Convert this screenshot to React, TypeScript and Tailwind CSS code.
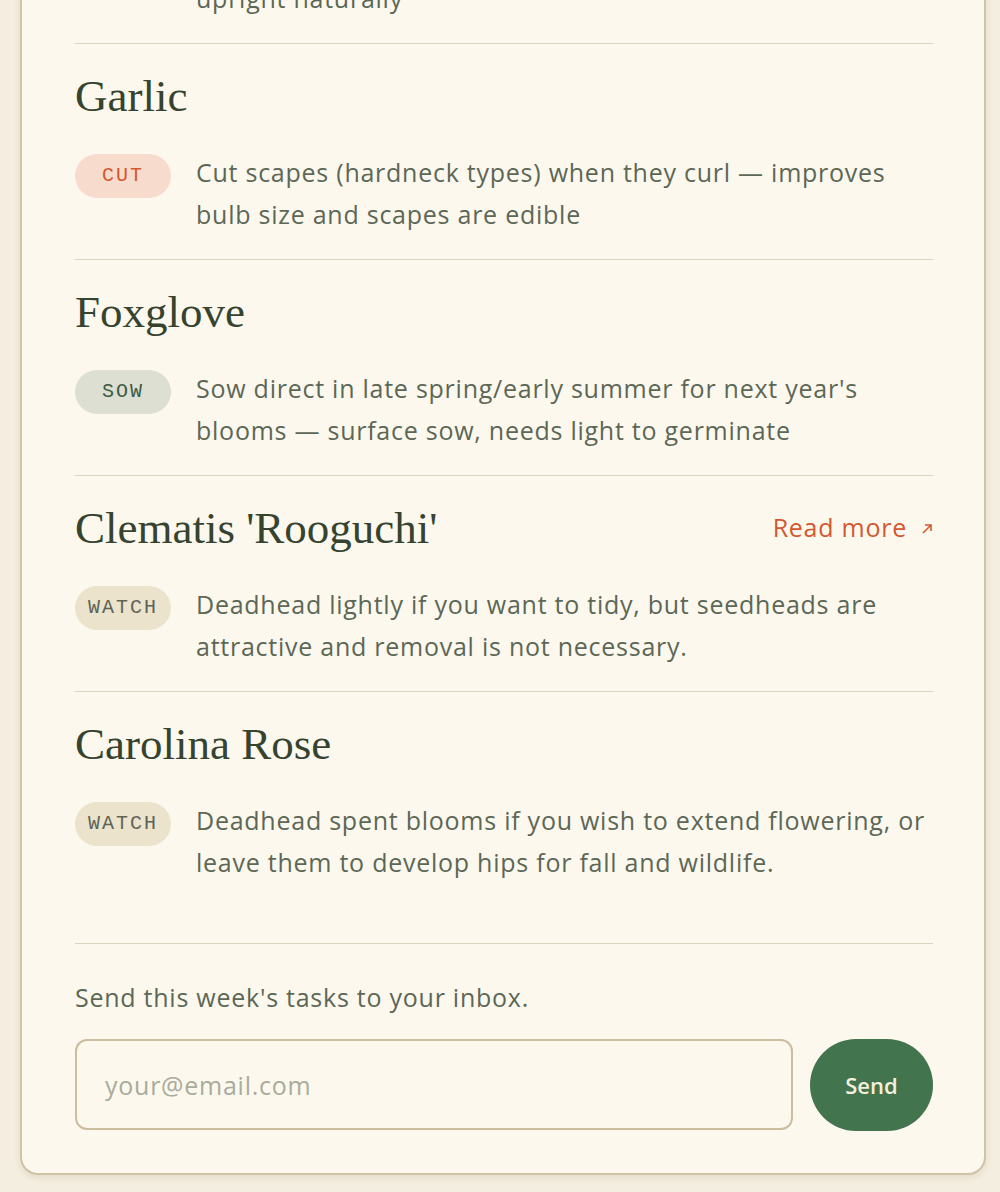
import { useState } from "react";

type Tag = "CUT" | "SOW" | "WATCH";

type Task = {
  plant: string;
  tag: Tag;
  text: React.ReactNode;
  link?: boolean;
};

const tasks: Task[] = [
  {
    plant: "Peony",
    tag: "WATCH",
    text: (
      <>
        Stake tall varieties early — few stems stay
        <br />
        upright naturally
      </>
    ),
  },
  {
    plant: "Garlic",
    tag: "CUT",
    text: "Cut scapes (hardneck types) when they curl — improves bulb size and scapes are edible",
  },
  {
    plant: "Foxglove",
    tag: "SOW",
    text: "Sow direct in late spring/early summer for next year's blooms — surface sow, needs light to germinate",
  },
  {
    plant: "Clematis 'Rooguchi'",
    tag: "WATCH",
    text: "Deadhead lightly if you want to tidy, but seedheads are attractive and removal is not necessary.",
    link: true,
  },
  {
    plant: "Carolina Rose",
    tag: "WATCH",
    text: "Deadhead spent blooms if you wish to extend flowering, or leave them to develop hips for fall and wildlife.",
  },
];

const tagStyles: Record<Tag, string> = {
  CUT: "bg-[#f7dccd] text-[#d4572f]",
  SOW: "bg-[#dcdfd2] text-[#3f5a43]",
  WATCH: "bg-[#ece3cc] text-[#5f6458]",
};

const serif = { fontFamily: '"Liberation Serif", serif' };
const sans = { fontFamily: '"Open Sans", "Noto Sans", sans-serif' };
const mono = { fontFamily: '"Liberation Mono", monospace' };

function TaskRow({ task, first }: { task: Task; first: boolean }) {
  return (
    <div className={first ? "pt-7 pb-6" : "border-t border-[#ddd4bf] pt-7 pb-6"}>
      <div className="flex h-12 items-center justify-between">
        <h3 className="text-[45px] leading-[48px] text-[#35432f]" style={serif}>
          {task.plant}
        </h3>
        {task.link && (
          <a
            href="#"
            className="flex items-center gap-[14px] text-[25px] tracking-[0.03em] text-[#d4582e]"
            style={sans}
          >
            Read more
            <svg width="12" height="12" viewBox="0 0 12 12" fill="none" className="mt-[2px]">
              <path d="M2 10 L10 2 M4 2 H10 V8" stroke="currentColor" strokeWidth="1.6" />
            </svg>
          </a>
        )}
      </div>
      <div className="mt-[31px] flex items-start gap-[25px]">
        <span
          className={`mt-[3px] flex h-[44px] w-[96px] shrink-0 items-center justify-center rounded-full text-[20px] tracking-[0.1em] ${tagStyles[task.tag]}`}
          style={mono}
        >
          {task.tag}
        </span>
        <p
          className="text-[25px] leading-[42px] tracking-[0.03em] text-[#5c6756]"
          style={sans}
        >
          {task.text}
        </p>
      </div>
    </div>
  );
}

export default function App() {
  const [email, setEmail] = useState("");

  return (
    <div className="h-[1192px] overflow-hidden bg-[#f4eee0]">
      <div className="ml-[20px] mt-[-174px] w-[966px] rounded-b-[18px] border-2 border-[#cfc3a6] bg-[#fcf8ee] pb-[42px] pl-[53px] pr-[51px] shadow-[0_3px_6px_rgba(120,100,60,0.12)]">
        {tasks.map((t, i) => (
          <TaskRow key={t.plant} task={t} first={i === 0} />
        ))}

        <div className="mt-[36px] border-t border-[#ddd4bf] pt-[35px]">
          <p
            className="text-[25px] leading-[36px] tracking-[0.03em] text-[#5c6756]"
            style={sans}
          >
            Send this week's tasks to your inbox.
          </p>
          <form
            className="mt-6 flex gap-[17px]"
            onSubmit={(e) => e.preventDefault()}
          >
            <input
              type="email"
              value={email}
              onChange={(e) => setEmail(e.target.value)}
              placeholder="your@email.com"
              className="h-[91px] min-w-0 flex-1 rounded-[12px] border-2 border-[#cbbd9e] bg-[#fcf8ee] px-[28px] text-[25px] tracking-[0.03em] text-[#4a5545] outline-none placeholder:text-[#a9ac9a]"
              style={sans}
            />
            <button
              type="submit"
              className="h-[92px] w-[123px] rounded-full bg-[#42744d] text-[22px] font-semibold text-[#f5efdc]"
              style={sans}
            >
              Send
            </button>
          </form>
        </div>
      </div>
    </div>
  );
}
